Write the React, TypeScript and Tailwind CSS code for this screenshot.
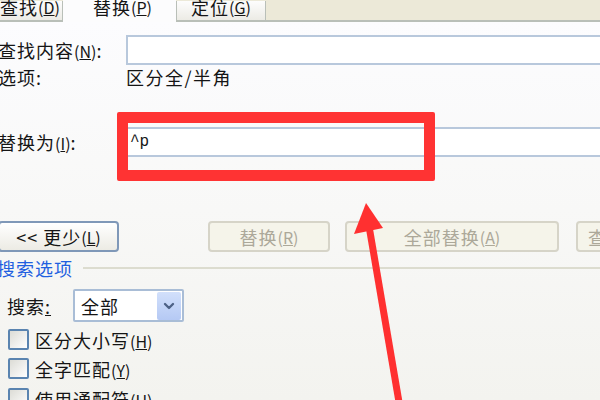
import { ChevronDown } from "lucide-react";

const font = { fontFamily: '"Noto Sans CJK SC", "Liberation Sans", sans-serif' };

function Acc({ k }: { k: string }) {
  return (
    <span className="text-[16px] tracking-normal">
      (<span className="underline">{k}</span>)
    </span>
  );
}

function Check({ label, k }: { label: string; k: string }) {
  return (
    <div className="flex h-[21px] shrink-0 items-center gap-[6px] pl-[8px]">
      <div className="h-[21px] w-[21px] shrink-0 rounded-[2px] border-2 border-[#5a84b0] bg-gradient-to-br from-[#dcdcd6] to-white" />
      <span className="whitespace-nowrap">
        {label}
        <Acc k={k} />
      </span>
    </div>
  );
}

export default function App() {
  return (
    <div className="relative h-[400px] w-[600px] overflow-hidden bg-[#ece9d8]" style={font}>
      {/* tab strip */}
      <div className="flex h-[22px] items-end text-[18px] leading-none tracking-[1px] text-[#151515]">
        <div className="-ml-[2px] flex h-[21px] w-[65px] shrink-0 items-center justify-center whitespace-nowrap border-r border-b-2 border-[#b9bfb8] bg-gradient-to-b from-[#fdfdfd] to-[#ecebe5] pb-[8px]">
          查找<Acc k="D" />
        </div>
        <div className="flex h-[22px] w-[113px] shrink-0 items-center justify-center whitespace-nowrap bg-[#fcfcfd] pb-[8px] pl-[6px]">
          替换<Acc k="P" />
        </div>
        <div className="flex h-[21px] w-[90px] shrink-0 items-center justify-center whitespace-nowrap border-x border-b-2 border-[#b9bfb8] bg-gradient-to-b from-[#fdfdfd] to-[#ecebe5] pb-[8px]">
          定位<Acc k="G" />
        </div>
        <div className="h-[22px] flex-1 border-b-2 border-[#b9bfb8]" />
      </div>

      {/* page body */}
      <div className="flex h-[378px] flex-col bg-gradient-to-b from-[#fcfcfe] via-[#f8f8f7] to-[#f3f3ef] text-[18px] leading-none tracking-[1px] text-[#151515]">
        <div className="mt-[13px] flex h-[30px] shrink-0 items-center">
          <span className="-ml-[2px] w-[128px] shrink-0 whitespace-nowrap">
            查找内容<Acc k="N" />:
          </span>
          <div className="h-[30px] flex-1 border-y-2 border-l-2 border-[#b8c8dc] bg-white" />
        </div>
        <div className="flex h-[24px] shrink-0 items-center">
          <span className="-ml-[2px] w-[128px] shrink-0">选项:</span>
          <span className="tracking-[1.5px]">区分全/半角</span>
        </div>

        <div className="mt-[38px] flex h-[30px] shrink-0 items-center">
          <span className="-ml-[2px] w-[128px] shrink-0 whitespace-nowrap">
            替换为<Acc k="I" />:
          </span>
          <div className="flex h-[30px] flex-1 items-center border-y-2 border-l-2 border-[#b8c8dc] bg-white pl-[2px]" style={{ fontFamily: '"Liberation Mono", monospace' }}>
            <span className="text-[16px] tracking-normal">^p</span>
          </div>
        </div>

        <div className="mt-[64px] flex h-[31px] shrink-0 items-center">
          <button className="-ml-[2px] flex h-[31px] w-[121px] shrink-0 items-center justify-center whitespace-nowrap rounded-[4px] border-2 border-[#7f98b8] bg-gradient-to-b from-white to-[#ecebe4]">
            &lt;&lt; 更少<Acc k="L" />
          </button>
          <button className="ml-[89px] flex h-[31px] w-[122px] shrink-0 items-center justify-center whitespace-nowrap rounded-[4px] border-2 border-[#d6d4c8] bg-[#f5f4ea] text-[#aca899]">
            替换 <Acc k="R" />
          </button>
          <button className="ml-[15px] flex h-[31px] w-[214px] shrink-0 items-center justify-center whitespace-nowrap rounded-[4px] border-2 border-[#d6d4c8] bg-[#f5f4ea] text-[#aca899]">
            全部替换<Acc k="A" />
          </button>
          <button className="ml-[17px] flex h-[31px] w-[60px] shrink-0 items-center justify-start whitespace-nowrap rounded-[4px] border-2 border-[#d6d4c8] bg-[#f5f4ea] pl-[10px] text-[#aca899]">
            查找
          </button>
        </div>

        <div className="mt-[4px] flex h-[24px] shrink-0 items-center">
          <span className="-ml-[3px] whitespace-nowrap text-[#1f5fe0]">搜索选项</span>
          <div className="ml-[10px] h-[2px] flex-1 bg-[#dcdccf]" />
        </div>

        <div className="mt-[9px] flex h-[33px] shrink-0 items-center">
          <span className="w-[73px] shrink-0 whitespace-nowrap pl-[7px]">
            搜索<span className="underline">:</span>
          </span>
          <div className="flex h-[33px] w-[111px] shrink-0 items-center justify-between rounded-[2px] border-2 border-[#a9bdd6] bg-white pl-[6px] pr-[1px]">
            <span>全部</span>
            <div className="flex h-[28px] w-[24px] items-center justify-center rounded-[2px] bg-gradient-to-b from-[#d2e0fb] to-[#b5c9f4]">
              <ChevronDown size={16} strokeWidth={3.5} className="text-[#4d6185]" />
            </div>
          </div>
        </div>

        <div className="mt-[7px] shrink-0">
          <Check label="区分大小写" k="H" />
        </div>
        <div className="mt-[8px] shrink-0">
          <Check label="全字匹配" k="Y" />
        </div>
        <div className="mt-[9px] shrink-0">
          <Check label="使用通配符" k="U" />
        </div>
      </div>

      {/* annotation overlay */}
      <div className="absolute left-[117px] top-[112px] h-[69px] w-[318px] rounded-[2px] border-[11px] border-[#ff3333]" />
      <svg className="absolute left-0 top-0" width="600" height="400" viewBox="0 0 600 400">
        <line x1="369" y1="226" x2="399" y2="402" stroke="#ff3030" strokeWidth="7" />
        <polygon points="366,203 354,234 383,228" fill="#ff3030" />
      </svg>
    </div>
  );
}
